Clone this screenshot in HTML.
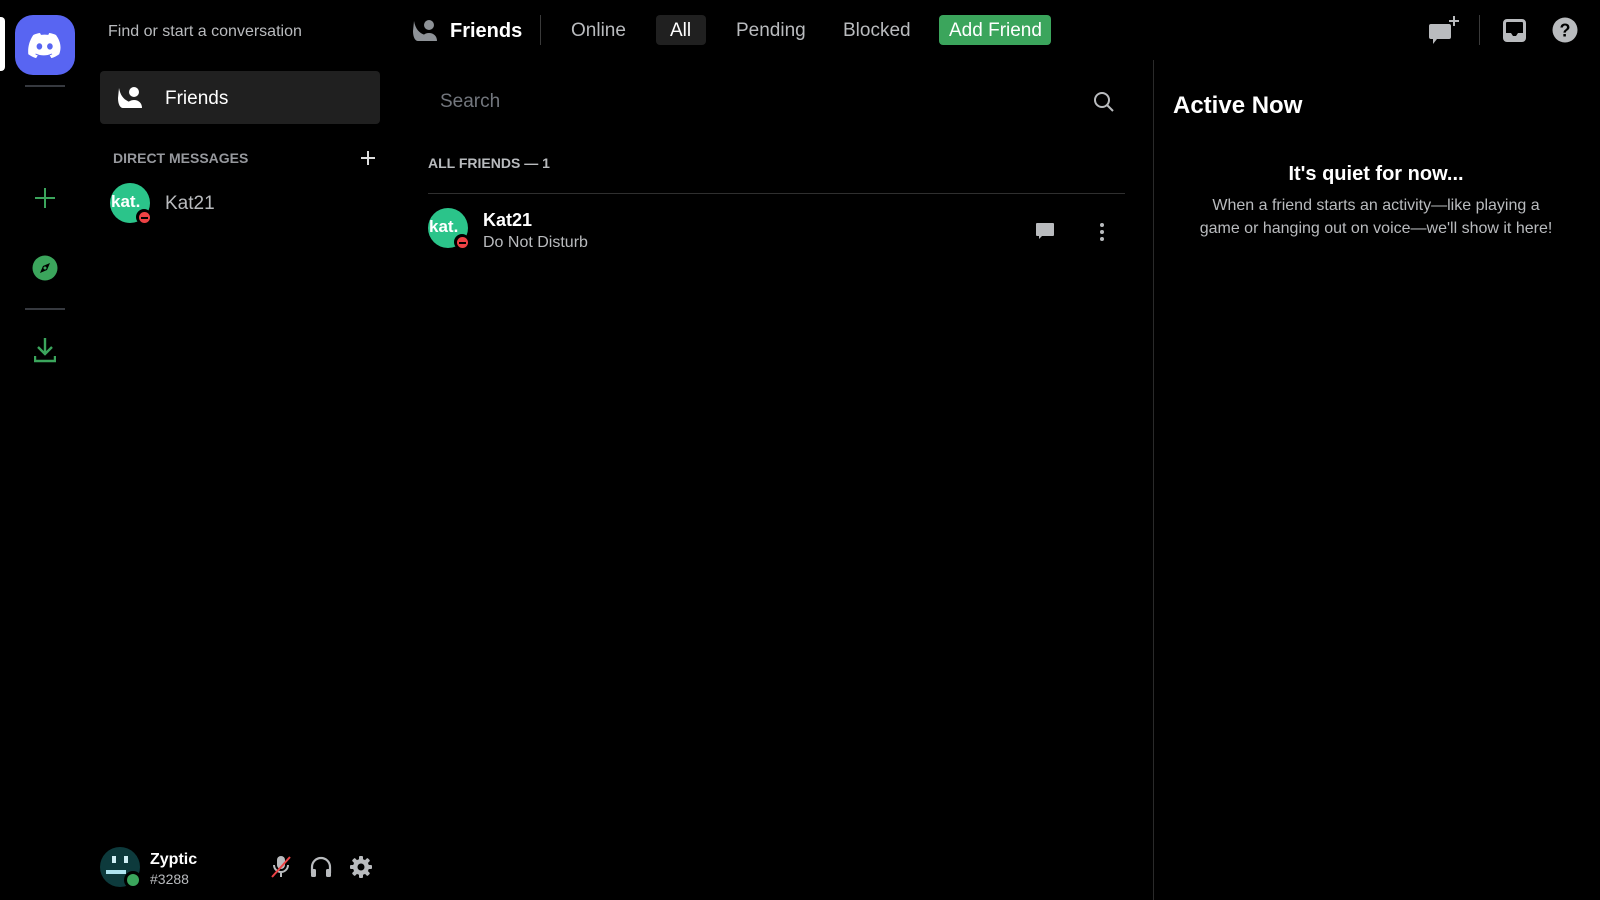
<!DOCTYPE html>
<html><head><meta charset="utf-8"><style>
*{box-sizing:border-box;margin:0;padding:0}
body{width:1600px;height:900px;background:#000;font-family:"Liberation Sans",sans-serif;position:relative;overflow:hidden;color:#fff}
.a{position:absolute}
.t{position:absolute;white-space:nowrap}
</style></head><body>
<div class="a" style="left:0;top:17px;width:5px;height:54px;background:#fff;border-radius:0 4px 4px 0"></div>
<div class="a" style="left:15px;top:15px;width:60px;height:60px;background:#5865f2;border-radius:18px"></div>
<svg class="a" style="left:28px;top:30px" width="34" height="30" viewBox="0 0 34 30"><path fill="#fff" d="M28 5C25.8 4 23.5 3.3 21.2 3l-.9 1.9c-2.4-.4-4.9-.4-7.3 0L12 3C9.7 3.3 7.4 4 5.3 5 .9 11.5-.3 17.9.3 24.2c2.6 1.9 5.2 3.1 7.8 3.9l1.7-2.700c-.9-.3-1.8-.8-2.6-1.3l.6-.5c5.1 2.4 10.8 2.4 15.9 0l.6.5c-.8.5-1.7.9-2.6 1.3l1.7 2.7c2.6-.8 5.2-2 7.8-3.9C34 16.9 32 10.6 28 5zM11.4 19.6c-1.6 0-2.8-1.5-2.8-3.2s1.2-3.2 2.8-3.2 2.9 1.5 2.8 3.2c0 1.8-1.2 3.2-2.8 3.2zm10.5 0c-1.6 0-2.8-1.5-2.8-3.2s1.2-3.2 2.8-3.2 2.9 1.500 2.8 3.2c0 1.8-1.2 3.2-2.8 3.2z"/></svg>
<div class="a" style="left:25px;top:85px;width:40px;height:2px;background:#36393f"></div>
<svg class="a" style="left:35px;top:188px" width="20" height="20"><path d="M10 0v20M0 10h20" stroke="#3ba55c" stroke-width="2"/></svg>
<svg class="a" style="left:32px;top:255px" width="26" height="26" viewBox="0 0 26 26"><circle cx="13" cy="13" r="12.5" fill="#3ba55c"/><path d="M18 8l-3 7-7 3 3-7z" fill="#000"/><circle cx="13" cy="13" r="1.5" fill="#3ba55c"/></svg>
<div class="a" style="left:25px;top:308px;width:40px;height:2px;background:#36393f"></div>
<svg class="a" style="left:34px;top:337px" width="22" height="26" viewBox="0 0 22 26"><path d="M11 1v15M4 10l7 7 7-7M1 19v5h20v-5" stroke="#3ba55c" stroke-width="2.4" fill="none"/></svg>

<div class="t" style="left:108px;top:23px;font-size:16px;color:#b9bbbe">Find or start a conversation</div>
<div class="a" style="left:100px;top:71px;width:280px;height:53px;background:#202020;border-radius:4px"></div>
<svg class="a" style="left:117px;top:86px" width="28" height="22" viewBox="0 0 28 22"><circle cx="17" cy="6" r="5" fill="#fff"/><path d="M9 22c0-5 3.5-8 8-8s8 3 8 8z" fill="#fff"/><path d="M2 2c1.5 8 5 12 11 14l-2 6H6C3 22 1 18 1 12z" fill="#fff"/></svg>
<div class="t" style="left:165px;top:88px;font-size:19px;color:#fff">Friends</div>
<div class="t" style="left:113px;top:150px;font-size:14px;font-weight:bold;color:#96989d">DIRECT MESSAGES</div>
<svg class="a" style="left:361px;top:151px" width="14" height="14"><path d="M7 0v14M0 7h14" stroke="#ddd" stroke-width="2"/></svg>
<div class="a" style="left:110px;top:183px;width:40px;height:40px;border-radius:50%;background:#2bc48a"></div>
<div class="t" style="left:111px;top:192px;font-size:17px;font-weight:bold;color:#fff">kat.</div>
<div class="a" style="left:136px;top:209px;width:16px;height:16px;border-radius:50%;background:#000"></div>
<div class="a" style="left:139px;top:212px;width:11px;height:11px;border-radius:50%;background:#ed4245"></div>
<div class="a" style="left:141px;top:216.5px;width:7px;height:2px;background:#000"></div>
<div class="t" style="left:165px;top:193px;font-size:19px;color:#b9bbbe">Kat21</div>

<div class="a" style="left:100px;top:847px;width:40px;height:40px;border-radius:50%;background:#0d3a3c"></div>
<div class="a" style="left:112px;top:856px;width:4px;height:7px;background:#cfeff5"></div>
<div class="a" style="left:124px;top:856px;width:4px;height:7px;background:#cfeff5"></div>
<div class="a" style="left:106px;top:870px;width:20px;height:4px;background:#aee4f0"></div>
<div class="a" style="left:124px;top:871px;width:18px;height:18px;border-radius:50%;background:#000"></div>
<div class="a" style="left:127px;top:874px;width:12px;height:12px;border-radius:50%;background:#3ba55c"></div>
<div class="t" style="left:150px;top:851px;font-size:16px;font-weight:bold">Zyptic</div>
<div class="t" style="left:150px;top:871px;font-size:14px;color:#b9bbbe">#3288</div>
<svg class="a" style="left:270px;top:855px" width="22" height="24" viewBox="0 0 22 24"><rect x="7" y="1" width="8" height="13" rx="4" fill="#b9bbbe"/><path d="M4 10a7 7 0 0014 0M11 17v5" stroke="#b9bbbe" stroke-width="2" fill="none"/><path d="M2 22L20 2" stroke="#ed4245" stroke-width="2"/></svg>
<svg class="a" style="left:309px;top:855px" width="24" height="24" viewBox="0 0 24 24"><path d="M3 18v-6a9 9 0 0118 0v6" stroke="#b9bbbe" stroke-width="2.2" fill="none"/><rect x="2" y="14" width="5" height="8" rx="1.5" fill="#b9bbbe"/><rect x="17" y="14" width="5" height="8" rx="1.5" fill="#b9bbbe"/></svg>
<svg class="a" style="left:349px;top:855px" width="24" height="24" viewBox="0 0 24 24"><g fill="#b9bbbe"><circle cx="12" cy="12" r="8"/><rect x="10" y="1" width="4" height="22" rx="1"/><rect x="10" y="1" width="4" height="22" rx="1" transform="rotate(45 12 12)"/><rect x="10" y="1" width="4" height="22" rx="1" transform="rotate(90 12 12)"/><rect x="10" y="1" width="4" height="22" rx="1" transform="rotate(135 12 12)"/></g><circle cx="12" cy="12" r="3.5" fill="#000"/></svg>

<svg class="a" style="left:412px;top:19px" width="28" height="22" viewBox="0 0 28 22"><circle cx="17" cy="6" r="5" fill="#8e9297"/><path d="M9 22c0-5 3.5-8 8-8s8 3 8 8z" fill="#8e9297"/><path d="M2 2c1.5 8 5 12 11 14l-2 6H6C3 22 1 18 1 12z" fill="#8e9297"/></svg>
<div class="t" style="left:450px;top:20px;font-size:20px;font-weight:bold">Friends</div>
<div class="a" style="left:540px;top:15px;width:1px;height:30px;background:#3a3a3a"></div>
<div class="t" style="left:571px;top:20px;font-size:19px;color:#b9bbbe">Online</div>
<div class="a" style="left:656px;top:15px;width:50px;height:30px;background:#202020;border-radius:4px"></div>
<div class="t" style="left:670px;top:20px;font-size:19px;color:#fff">All</div>
<div class="t" style="left:736px;top:20px;font-size:19px;color:#b9bbbe">Pending</div>
<div class="t" style="left:843px;top:20px;font-size:19px;color:#b9bbbe">Blocked</div>
<div class="a" style="left:939px;top:15px;width:112px;height:30px;background:#3ba55c;border-radius:4px"></div>
<div class="t" style="left:949px;top:20px;font-size:19px;color:#fff">Add Friend</div>
<svg class="a" style="left:1428px;top:14px" width="34" height="32" viewBox="0 0 34 32"><path d="M3 10h18a2 2 0 012 2v11a2 2 0 01-2 2H9l-4 5v-5H3a2 2 0 01-2-2V12a2 2 0 012-2z" fill="#b9bbbe"/><path d="M26 2v10M21 7h10" stroke="#b9bbbe" stroke-width="2"/></svg>
<div class="a" style="left:1479px;top:15px;width:1px;height:30px;background:#3a3a3a"></div>
<svg class="a" style="left:1503px;top:19px" width="23" height="23" viewBox="0 0 23 23"><rect x="1.5" y="1.5" width="20" height="20" rx="2.5" stroke="#b9bbbe" stroke-width="3" fill="none"/><path d="M3 14h5l2 3h3l2-3h5v6H3z" fill="#b9bbbe"/></svg>
<svg class="a" style="left:1552px;top:17px" width="26" height="26" viewBox="0 0 26 26"><circle cx="13" cy="13" r="12.5" fill="#b9bbbe"/><text x="13" y="19.5" text-anchor="middle" font-family="Liberation Sans" font-weight="bold" font-size="18" fill="#000">?</text></svg>

<div class="t" style="left:440px;top:91px;font-size:19px;color:#72767d">Search</div>
<svg class="a" style="left:1093px;top:91px" width="22" height="22" viewBox="0 0 22 22"><circle cx="9" cy="9" r="7" stroke="#b9bbbe" stroke-width="2" fill="none"/><path d="M14 14l6 6" stroke="#b9bbbe" stroke-width="2"/></svg>
<div class="t" style="left:428px;top:155px;font-size:14px;font-weight:bold;color:#b9bbbe">ALL FRIENDS — 1</div>
<div class="a" style="left:428px;top:193px;width:697px;height:1px;background:#2f2f2f"></div>
<div class="a" style="left:428px;top:208px;width:40px;height:40px;border-radius:50%;background:#2bc48a"></div>
<div class="t" style="left:429px;top:217px;font-size:17px;font-weight:bold;color:#fff">kat.</div>
<div class="a" style="left:454px;top:234px;width:16px;height:16px;border-radius:50%;background:#000"></div>
<div class="a" style="left:457px;top:237px;width:11px;height:11px;border-radius:50%;background:#ed4245"></div>
<div class="a" style="left:459px;top:241.5px;width:7px;height:2px;background:#000"></div>
<div class="t" style="left:483px;top:210px;font-size:18px;font-weight:bold">Kat21</div>
<div class="t" style="left:483px;top:234px;font-size:16px;color:#b9bbbe">Do Not Disturb</div>
<svg class="a" style="left:1035px;top:222px" width="20" height="20" viewBox="0 0 20 20"><path d="M2 1h16a1 1 0 011 1v11a1 1 0 01-1 1H7l-3 3v-3H2a1 1 0 01-1-1V2a1 1 0 011-1z" fill="#b9bbbe"/></svg>
<svg class="a" style="left:1098px;top:222px" width="8" height="20"><circle cx="4" cy="3" r="2" fill="#b9bbbe"/><circle cx="4" cy="10" r="2" fill="#b9bbbe"/><circle cx="4" cy="17" r="2" fill="#b9bbbe"/></svg>

<div class="a" style="left:1153px;top:60px;width:1px;height:840px;background:#2a2a2a"></div>
<div class="t" style="left:1173px;top:92px;font-size:24px;font-weight:bold">Active Now</div>
<div class="t" style="left:1156px;width:440px;text-align:center;top:163px;font-size:20px;font-weight:bold">It's quiet for now...</div>
<div class="a" style="left:1156px;width:440px;text-align:center;top:194px;font-size:16px;line-height:23px;color:#b9bbbe">When a friend starts an activity—like playing a<br>game or hanging out on voice—we'll show it here!</div>
</body></html>
